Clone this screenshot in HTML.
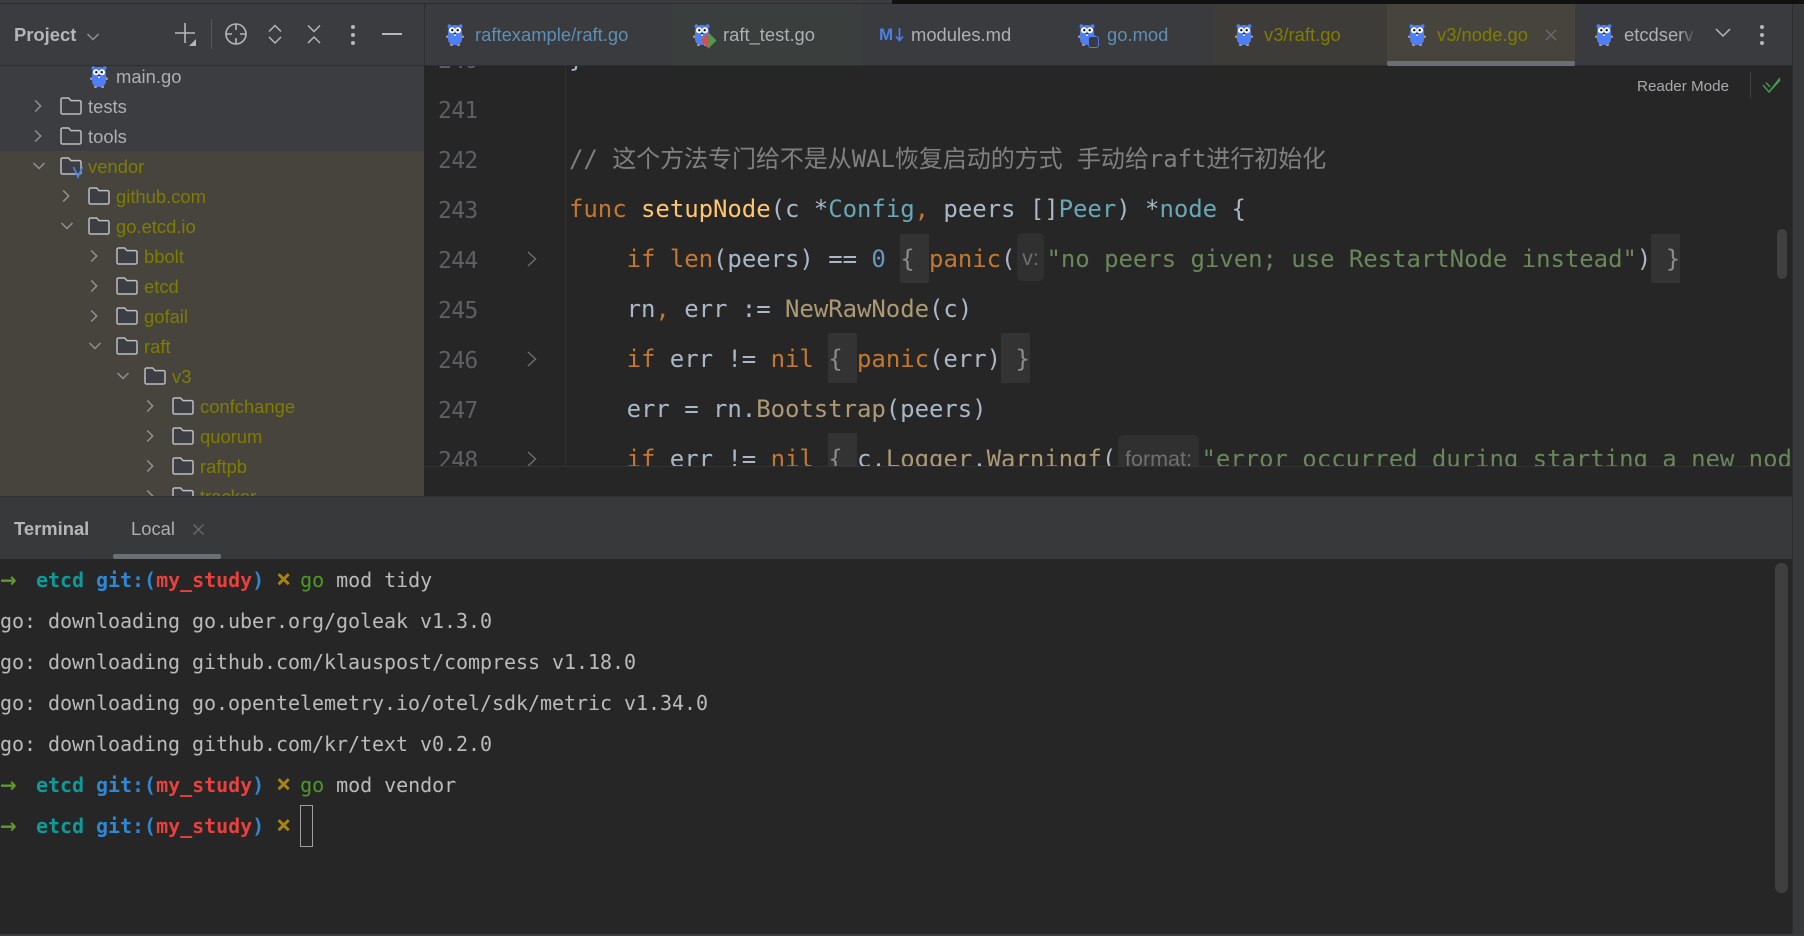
<!DOCTYPE html>
<html><head><meta charset="utf-8"><style>
*{box-sizing:border-box}
html,body{margin:0;padding:0;width:1804px;height:936px;overflow:hidden;background:#262626}
.a{position:absolute}
.t{position:absolute;white-space:pre;font-family:"Liberation Sans","Noto Sans CJK SC",sans-serif;font-size:18.4px;height:30px;line-height:30px}
.o{color:#7f7d00}.g{color:#adafb1}
.c{position:absolute;white-space:pre;font-family:"DejaVu Sans Mono","Noto Sans CJK SC",monospace;font-size:24px;letter-spacing:-.05px;line-height:50px;height:50px;color:#a9b7c6}
.n{position:absolute;left:438px;font-family:"DejaVu Sans Mono",monospace;font-size:23px;letter-spacing:-.65px;line-height:50px;height:50px;color:#5c5f63}
.k{color:#c47730}.f{color:#ffc66d}.y{color:#68a7b5}.s{color:#6a8759}.m{color:#808080}.u{color:#6897bb}.b{color:#ac9a74}.d{color:#8b8b8b}
.box{position:absolute;background:#333}
.h{position:absolute;background:#303030;border-radius:5px;color:#6f6f6f;font-family:"Liberation Sans",sans-serif;font-size:21.5px;line-height:50px;text-align:center}
.r{position:absolute;left:0;white-space:pre;font-family:"DejaVu Sans Mono",monospace;font-size:20px;letter-spacing:-.04px;line-height:41px;height:41px;color:#bbbbbb}
.r b.w{color:#5f9a2f;display:inline-block;width:12px;font-size:20px;font-family:"DejaVu Sans",sans-serif;overflow:visible}.r b.e{color:#0d9a9a}.r b.i{color:#2f86d2}.r b.q{color:#e8403c}.r b.v{color:#a9850f;display:inline-block;width:12px;font-size:25px;line-height:20px;text-align:center}.r .l{color:#4e9a25}
svg.ic{position:absolute;overflow:visible}
</style></head><body>
<svg width="0" height="0" style="position:absolute"><defs>
<symbol id="go" viewBox="0 0 18 22">
<rect x="0" y="11.5" width="3" height="2.4" rx="1" fill="#c79a74"/><rect x="15" y="11.5" width="3" height="2.4" rx="1" fill="#c79a74"/>
<rect x="4" y="19.8" width="3" height="2.2" rx="1" fill="#c79a74"/><rect x="11" y="19.8" width="3" height="2.2" rx="1" fill="#c79a74"/>
<circle cx="3.4" cy="2.2" r="1.9" fill="#4f7ff5"/><circle cx="14.6" cy="2.2" r="1.9" fill="#4f7ff5"/>
<path d="M2 8C2 3 5 1 9 1S16 3 16 8V15C16 19 13 21 9 21S2 19 2 15Z" fill="#4f7ff5"/>
<circle cx="6" cy="6.3" r="3" fill="#fff"/><circle cx="12" cy="6.3" r="3" fill="#fff"/>
<circle cx="6.3" cy="6.2" r="1.2" fill="#111"/><circle cx="11.7" cy="6.2" r="1.2" fill="#111"/>
<rect x="7.9" y="9" width="2.2" height="1.5" rx=".7" fill="#222"/><rect x="8" y="10.3" width="2" height="1.6" fill="#eee"/>
</symbol>
<symbol id="fd" viewBox="0 0 22 18"><path d="M2.5 1H8.6L11 3.6H19.5A1.5 1.5 0 0 1 21 5.1V15.5A1.5 1.5 0 0 1 19.5 17H2.5A1.5 1.5 0 0 1 1 15.5V2.5A1.5 1.5 0 0 1 2.5 1Z" fill="none" stroke="#bcbdbe" stroke-width="1.5"/></symbol>
<symbol id="fv" viewBox="0 0 22 18"><path d="M2.5 1H8.6L11 3.6H19.5A1.5 1.5 0 0 1 21 5.1V15.5A1.5 1.5 0 0 1 19.5 17H2.5A1.5 1.5 0 0 1 1 15.5V2.5A1.5 1.5 0 0 1 2.5 1Z" fill="#3c3e43" stroke="#bcbdbe" stroke-width="1.5"/></symbol>
<symbol id="cr" viewBox="0 0 12 12"><path d="M2.2 .5L7.7 6L2.2 11.5" fill="none" stroke="#8f9193" stroke-width="1.5"/></symbol>
<symbol id="cd" viewBox="0 0 12 12"><path d="M.5 3L6 8.5L11.5 3" fill="none" stroke="#8f9193" stroke-width="1.5"/></symbol>
</defs></svg>

<!-- top strip -->
<div class="a" style="left:0;top:0;width:1804px;height:4px;background:#3a3c3e"></div>
<div class="a" style="left:0;top:3px;width:1804px;height:1px;background:#2c2d2e"></div>
<div class="a" style="left:892px;top:0;width:912px;height:4px;background:#111"></div>

<!-- editor bg -->
<div class="a" style="left:424px;top:65px;width:1368px;height:432px;background:#262626"></div>
<!-- sidebar -->
<div class="a" style="left:0;top:65px;width:424px;height:86px;background:#3b3d40"></div>
<div class="a" style="left:0;top:151px;width:424px;height:346px;background:#47443d"></div>
<!-- sidebar header -->
<div class="a" style="left:0;top:4px;width:424px;height:61px;background:#3a3c3f"></div>
<div class="a" style="left:0;top:65px;width:424px;height:1px;background:#2d2e30"></div>

<div class="t" style="left:14px;top:20px;font-weight:bold;color:#b4b6b8">Project</div>
<svg class="ic" style="left:87px;top:31px" width="12" height="12"><use href="#cd"/></svg>
<svg class="ic" style="left:170px;top:20px" width="30" height="30" fill="none" stroke="#b5b6b7" stroke-width="1.6">
<path d="M15 3V23M5 13H25"/><path d="M19 26H26V19Z" fill="#b5b6b7" stroke="none"/></svg>
<div class="a" style="left:211px;top:19px;width:1px;height:30px;background:#55585a"></div>
<svg class="ic" style="left:224px;top:22px" width="24" height="24" fill="none" stroke="#b5b6b7" stroke-width="1.6">
<circle cx="12" cy="12" r="10"/><path d="M12 2V8M12 16V22M2 12H8M16 12H22"/></svg>
<svg class="ic" style="left:266px;top:23px" width="18" height="22" fill="none" stroke="#b5b6b7" stroke-width="1.5">
<path d="M3 8.5L9 2.5L15 8.5M3 14L9 20L15 14"/></svg>
<svg class="ic" style="left:305px;top:23px" width="18" height="22" fill="none" stroke="#b5b6b7" stroke-width="1.5">
<path d="M3 2.5L9 8.5L15 2.5M3 20L9 14L15 20"/></svg>
<div class="a" style="left:351px;top:25px;width:4px;height:4px;border-radius:2px;background:#b5b6b7"></div>
<div class="a" style="left:351px;top:33px;width:4px;height:4px;border-radius:2px;background:#b5b6b7"></div>
<div class="a" style="left:351px;top:41px;width:4px;height:4px;border-radius:2px;background:#b5b6b7"></div>
<div class="a" style="left:382px;top:33px;width:20px;height:2px;background:#b5b6b7"></div>

<!-- tree (clipped) -->
<div class="a" style="left:0;top:0;width:424px;height:936px;clip-path:inset(66px 0 440px 0)">
<svg class="ic" style="left:90px;top:66px" width="18" height="22"><use href="#go"/></svg>
<div class="t g" style="left:116px;top:62px">main.go</div>

<svg class="ic" style="left:33px;top:100px" width="12" height="12"><use href="#cr"/></svg>
<svg class="ic" style="left:60px;top:97px" width="22" height="18"><use href="#fd"/></svg>
<div class="t g" style="left:88px;top:92px">tests</div>
<svg class="ic" style="left:33px;top:130px" width="12" height="12"><use href="#cr"/></svg>
<svg class="ic" style="left:60px;top:127px" width="22" height="18"><use href="#fd"/></svg>
<div class="t g" style="left:88px;top:122px">tools</div>

<svg class="ic" style="left:33px;top:160px" width="12" height="12"><use href="#cd"/></svg>
<svg class="ic" style="left:60px;top:157px" width="22" height="18"><use href="#fv"/></svg>
<svg class="ic" style="left:72px;top:165px" width="12" height="14" fill="none" stroke="#4a7fe6" stroke-width="1.7"><path d="M1.5 2L6 12L10.5 2"/></svg>
<div class="t o" style="left:88px;top:152px">vendor</div>

<svg class="ic" style="left:61px;top:190px" width="12" height="12"><use href="#cr"/></svg>
<svg class="ic" style="left:88px;top:187px" width="22" height="18"><use href="#fv"/></svg>
<div class="t o" style="left:116px;top:182px">github.com</div>
<svg class="ic" style="left:61px;top:220px" width="12" height="12"><use href="#cd"/></svg>
<svg class="ic" style="left:88px;top:217px" width="22" height="18"><use href="#fv"/></svg>
<div class="t o" style="left:116px;top:212px">go.etcd.io</div>

<svg class="ic" style="left:89px;top:250px" width="12" height="12"><use href="#cr"/></svg>
<svg class="ic" style="left:116px;top:247px" width="22" height="18"><use href="#fv"/></svg>
<div class="t o" style="left:144px;top:242px">bbolt</div>
<svg class="ic" style="left:89px;top:280px" width="12" height="12"><use href="#cr"/></svg>
<svg class="ic" style="left:116px;top:277px" width="22" height="18"><use href="#fv"/></svg>
<div class="t o" style="left:144px;top:272px">etcd</div>
<svg class="ic" style="left:89px;top:310px" width="12" height="12"><use href="#cr"/></svg>
<svg class="ic" style="left:116px;top:307px" width="22" height="18"><use href="#fv"/></svg>
<div class="t o" style="left:144px;top:302px">gofail</div>
<svg class="ic" style="left:89px;top:340px" width="12" height="12"><use href="#cd"/></svg>
<svg class="ic" style="left:116px;top:337px" width="22" height="18"><use href="#fv"/></svg>
<div class="t o" style="left:144px;top:332px">raft</div>

<svg class="ic" style="left:117px;top:370px" width="12" height="12"><use href="#cd"/></svg>
<svg class="ic" style="left:144px;top:367px" width="22" height="18"><use href="#fv"/></svg>
<div class="t o" style="left:172px;top:362px">v3</div>

<svg class="ic" style="left:145px;top:400px" width="12" height="12"><use href="#cr"/></svg>
<svg class="ic" style="left:172px;top:397px" width="22" height="18"><use href="#fv"/></svg>
<div class="t o" style="left:200px;top:392px">confchange</div>
<svg class="ic" style="left:145px;top:430px" width="12" height="12"><use href="#cr"/></svg>
<svg class="ic" style="left:172px;top:427px" width="22" height="18"><use href="#fv"/></svg>
<div class="t o" style="left:200px;top:422px">quorum</div>
<svg class="ic" style="left:145px;top:460px" width="12" height="12"><use href="#cr"/></svg>
<svg class="ic" style="left:172px;top:457px" width="22" height="18"><use href="#fv"/></svg>
<div class="t o" style="left:200px;top:452px">raftpb</div>
<svg class="ic" style="left:145px;top:490px" width="12" height="12"><use href="#cr"/></svg>
<svg class="ic" style="left:172px;top:487px" width="22" height="18"><use href="#fv"/></svg>
<div class="t o" style="left:200px;top:482px">tracker</div>
</div>

<!-- tabs -->
<div class="a" style="left:424px;top:4px;width:1368px;height:61px;background:#393b3e"></div>
<div class="a" style="left:424px;top:4px;width:1px;height:61px;background:#2d2e30"></div>
<div class="a" style="left:672px;top:4px;width:190px;height:61px;background:#3a3e3d"></div>
<div class="a" style="left:1214px;top:4px;width:173px;height:61px;background:#3d3c39"></div>
<div class="a" style="left:1387px;top:4px;width:188px;height:61px;background:#47443d"></div>
<div class="a" style="left:424px;top:65px;width:1368px;height:1px;background:#2d2e30"></div>
<div class="a" style="left:1387px;top:61px;width:188px;height:5px;background:#6b6e72;border-radius:2px"></div>
<div class="a" style="left:1792px;top:4px;width:12px;height:932px;background:#38393b;border-left:1px solid #2d2e30"></div>

<svg class="ic" style="left:446px;top:24px" width="18" height="22"><use href="#go"/></svg>
<div class="t" style="left:475px;top:20px;color:#5f8fb3">raftexample/raft.go</div>

<svg class="ic" style="left:693px;top:24px" width="18" height="22"><use href="#go"/></svg>
<svg class="ic" style="left:700px;top:32px" width="17" height="17"><path d="M8.5 .5L.5 8.5L8.5 16.5Z" fill="#d4504a"/><path d="M8.5 .5L16.5 8.5L8.5 16.5Z" fill="#4a9a54"/></svg>
<div class="t g" style="left:723px;top:20px">raft_test.go</div>

<div class="t" style="left:879px;top:20px;color:#4a7fe6;font-weight:bold;font-size:17px">M</div>
<svg class="ic" style="left:895px;top:27px" width="9" height="16" fill="none" stroke="#4a7fe6" stroke-width="1.7"><path d="M4.5 1V13M1 9.5L4.5 13.5L8 9.5"/></svg>
<div class="t g" style="left:911px;top:20px">modules.md</div>

<svg class="ic" style="left:1078px;top:24px" width="18" height="22"><use href="#go"/></svg>
<div class="a" style="left:1088px;top:36px;width:11px;height:12px;border:1.5px solid #4a7fe6;border-radius:3px;background:#393b3e"></div>
<div class="t" style="left:1107px;top:20px;color:#5f8fb3">go.mod</div>

<svg class="ic" style="left:1235px;top:24px" width="18" height="22"><use href="#go"/></svg>
<div class="t o" style="left:1264px;top:20px">v3/raft.go</div>

<svg class="ic" style="left:1408px;top:24px" width="18" height="22"><use href="#go"/></svg>
<div class="t o" style="left:1437px;top:20px">v3/node.go</div>
<svg class="ic" style="left:1545px;top:29px" width="12" height="12" stroke="#66686a" stroke-width="1.5"><path d="M1 1L11 11M11 1L1 11"/></svg>

<svg class="ic" style="left:1595px;top:24px" width="18" height="22"><use href="#go"/></svg>
<div class="t g" style="left:1624px;top:20px;width:70px;overflow:hidden">etcdserver</div>
<div class="a" style="left:1680px;top:20px;width:16px;height:30px;background:linear-gradient(90deg,rgba(57,59,62,0),#393b3e)"></div>
<svg class="ic" style="left:1715px;top:26px" width="16" height="14" fill="none" stroke="#b5b6b7" stroke-width="1.5"><path d="M1 3L8 10L15 3"/></svg>
<div class="a" style="left:1760px;top:25px;width:4px;height:4px;border-radius:2px;background:#b5b6b7"></div>
<div class="a" style="left:1760px;top:33px;width:4px;height:4px;border-radius:2px;background:#b5b6b7"></div>
<div class="a" style="left:1760px;top:41px;width:4px;height:4px;border-radius:2px;background:#b5b6b7"></div>

<!-- editor content -->
<div class="a" style="left:565px;top:66px;width:1px;height:400px;background:#323232"></div>
<div class="a" style="left:0;top:0;width:1804px;height:936px;clip-path:inset(66px 13px 470px 424px)">
<div class="box" style="left:900px;top:234px;width:29px;height:49px"></div>
<div class="box" style="left:1651px;top:234px;width:29px;height:49px"></div>
<div class="box" style="left:828px;top:333px;width:29px;height:50px"></div>
<div class="box" style="left:1001px;top:333px;width:29px;height:50px"></div>
<div class="box" style="left:828px;top:433px;width:29px;height:50px"></div>
<div class="h" style="left:1017px;top:233px;width:27px;height:48px">v:</div>
<div class="h" style="left:1118px;top:435px;width:81px;height:48px;line-height:48px">format:</div>

<div class="n" style="top:36px">240</div>
<div class="n" style="top:86px">241</div>
<div class="n" style="top:136px">242</div>
<div class="n" style="top:186px">243</div>
<div class="n" style="top:236px">244</div>
<div class="n" style="top:286px">245</div>
<div class="n" style="top:336px">246</div>
<div class="n" style="top:386px">247</div>
<div class="n" style="top:436px">248</div>

<svg class="ic" style="left:527px;top:251px" width="10" height="16" fill="none" stroke="#6e6e6e" stroke-width="1.4"><path d="M1 1L8.5 8L1 15"/></svg>
<svg class="ic" style="left:527px;top:351px" width="10" height="16" fill="none" stroke="#6e6e6e" stroke-width="1.4"><path d="M1 1L8.5 8L1 15"/></svg>
<svg class="ic" style="left:527px;top:451px" width="10" height="16" fill="none" stroke="#6e6e6e" stroke-width="1.4"><path d="M1 1L8.5 8L1 15"/></svg>

<div class="c" style="left:569px;top:34px">}</div>
<div class="c m" style="left:569px;top:134px">// 这个方法专门给不是从WAL恢复启动的方式 手动给raft进行初始化</div>
<div class="c" style="left:569px;top:184px"><span class="k">func</span> <span class="f">setupNode</span>(c *<span class="y">Config</span><span class="k">,</span> peers []<span class="y">Peer</span>) *<span class="y">node</span> {</div>
<div class="c" style="left:626.6px;top:234px"><span class="k">if</span> <span class="k">len</span>(peers) == <span class="u">0</span> <span class="d">{</span> <span class="k">panic</span>(</div>
<div class="c" style="left:1046.5px;top:234px"><span class="s">"no peers given; use RestartNode instead"</span>) <span class="d">}</span></div>
<div class="c" style="left:626.6px;top:284px">rn<span class="k">,</span> err := <span class="b">NewRawNode</span>(c)</div>
<div class="c" style="left:626.6px;top:334px"><span class="k">if</span> err != <span class="k">nil</span> <span class="d">{</span> <span class="k">panic</span>(err) <span class="d">}</span></div>
<div class="c" style="left:626.6px;top:384px">err = rn.<span class="b">Bootstrap</span>(peers)</div>
<div class="c" style="left:626.6px;top:434px"><span class="k">if</span> err != <span class="k">nil</span> <span class="d">{</span> c.<span class="b">Logger</span>.<span class="b">Warningf</span>(</div>
<div class="c s" style="left:1201.5px;top:434px">"error occurred during starting a new node</div>
</div>
<div class="a" style="left:424px;top:466px;width:1368px;height:1px;background:#333"></div>

<div class="t" style="left:1637px;top:72px;font-size:15.2px;color:#a8aaac">Reader Mode</div>
<div class="a" style="left:1750px;top:72px;width:1px;height:26px;background:#3e4042"></div>
<svg class="ic" style="left:1762px;top:77px" width="19" height="17" fill="none" stroke="#4a9a54" stroke-width="1.4"><path d="M1 8L7 15L18 1M4 5.5L8 10M7 15L18 3"/></svg>
<div class="a" style="left:1777px;top:229px;width:10px;height:50px;border-radius:5px;background:#404040"></div>

<!-- terminal header -->
<div class="a" style="left:0;top:496px;width:1792px;height:1px;background:#2d2e30"></div>
<div class="a" style="left:0;top:497px;width:1792px;height:62px;background:#37393b"></div>
<div class="t" style="left:14px;top:514px;font-weight:bold;color:#b4b6b8">Terminal</div>
<div class="t g" style="left:131px;top:514px">Local</div>
<svg class="ic" style="left:193px;top:524px" width="11" height="11" stroke="#66686a" stroke-width="1.4"><path d="M.5 .5L10.5 10.5M10.5 .5L.5 10.5"/></svg>
<div class="a" style="left:113px;top:554px;width:108px;height:5px;background:#6b6e72;border-radius:2px"></div>

<!-- terminal -->
<div class="a" style="left:0;top:559px;width:1792px;height:375px;background:#262626"></div>
<div class="a" style="left:0;top:934px;width:1804px;height:2px;background:#3a3c3f"></div>
<div class="a" style="left:1775px;top:563px;width:13px;height:330px;border-radius:6px;background:#3f3f3f"></div>

<div class="r" style="top:560px"><b class="w">→</b>  <b class="e">etcd</b> <b class="i">git:(</b><b class="q">my_study</b><b class="i">)</b> <b class="v">×</b> <span class="l">go</span> mod tidy</div>
<div class="r" style="top:601px">go: downloading go.uber.org/goleak v1.3.0</div>
<div class="r" style="top:642px">go: downloading github.com/klauspost/compress v1.18.0</div>
<div class="r" style="top:683px">go: downloading go.opentelemetry.io/otel/sdk/metric v1.34.0</div>
<div class="r" style="top:724px">go: downloading github.com/kr/text v0.2.0</div>
<div class="r" style="top:765px"><b class="w">→</b>  <b class="e">etcd</b> <b class="i">git:(</b><b class="q">my_study</b><b class="i">)</b> <b class="v">×</b> <span class="l">go</span> mod vendor</div>
<div class="r" style="top:806px"><b class="w">→</b>  <b class="e">etcd</b> <b class="i">git:(</b><b class="q">my_study</b><b class="i">)</b> <b class="v">×</b></div>
<div class="a" style="left:300px;top:805px;width:13px;height:42px;border:1px solid #a0a0a0"></div>
</body></html>
